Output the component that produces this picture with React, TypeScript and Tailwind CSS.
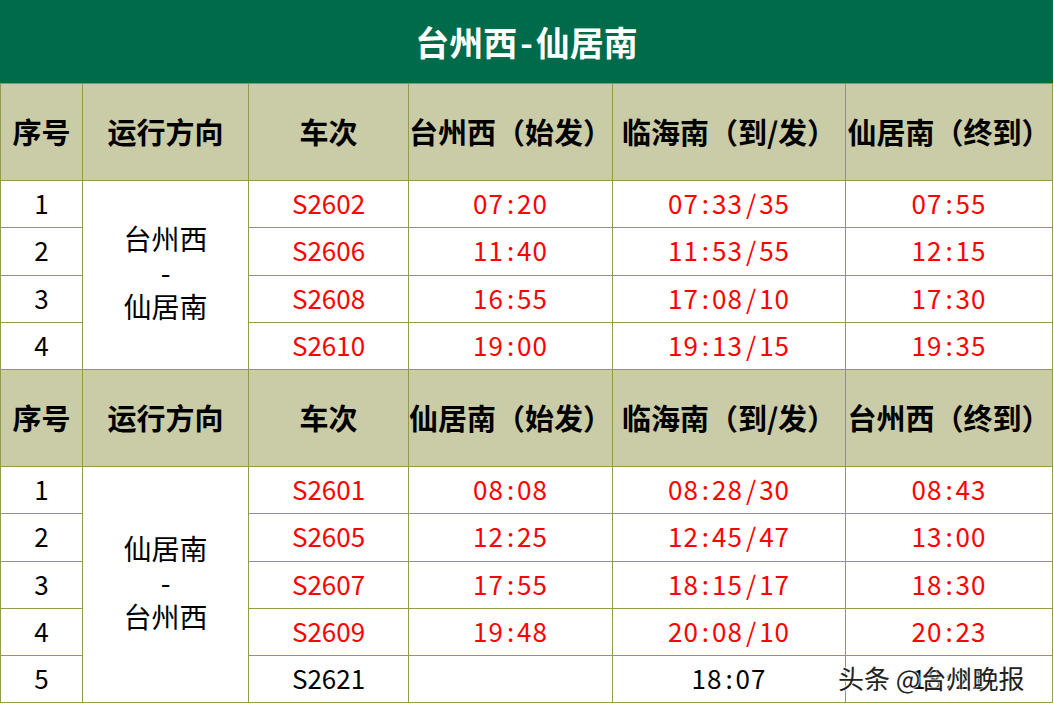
const FONT = "font-['Noto_Sans_CJK_SC',sans-serif]";

type Row = { no: string; train: string; a: string; b: string; c: string; red?: boolean };

const up: Row[] = [
  { no: "1", train: "S2602", a: "07:20", b: "07:33/35", c: "07:55", red: true },
  { no: "2", train: "S2606", a: "11:40", b: "11:53/55", c: "12:15", red: true },
  { no: "3", train: "S2608", a: "16:55", b: "17:08/10", c: "17:30", red: true },
  { no: "4", train: "S2610", a: "19:00", b: "19:13/15", c: "19:35", red: true },
];

const down: Row[] = [
  { no: "1", train: "S2601", a: "08:08", b: "08:28/30", c: "08:43", red: true },
  { no: "2", train: "S2605", a: "12:25", b: "12:45/47", c: "13:00", red: true },
  { no: "3", train: "S2607", a: "17:55", b: "18:15/17", c: "18:30", red: true },
  { no: "4", train: "S2609", a: "19:48", b: "20:08/10", c: "20:23", red: true },
  { no: "5", train: "S2621", a: "", b: "18:07", c: "18:21" },
];

// widen the separators a bit, the source font sets ":" and "/" half-width
function Time({ v }: { v: string }) {
  const parts = v.split(/([:/])/);
  return (
    <span>
      {parts.map((p, i) =>
        p === ":" || p === "/" ? (
          <span key={i} className="mx-[3px]">{p}</span>
        ) : (
          <span key={i} className="tracking-[1px]">{p}</span>
        )
      )}
    </span>
  );
}

function Head({ from, to }: { from: string; to: string }) {
  const cls = "bg-[#c9cca6] flex items-center justify-center text-[29px] font-bold text-black whitespace-nowrap";
  return (
    <>
      <div className={cls}>序号</div>
      <div className={cls}>运行方向</div>
      <div className={cls}>车次</div>
      <div className={cls}>{from}（始发）</div>
      <div className={cls}>临海南（到/发）</div>
      <div className={cls}>{to}（终到）</div>
    </>
  );
}

function Body({ rows, from, to, span }: { rows: Row[]; from: string; to: string; span: string }) {
  const cell = "bg-white flex items-center justify-center text-[26px] pb-[4px]";
  return (
    <>
      {rows.map((r, i) => {
        const tone = r.red ? "text-[#ff0000]" : "text-black";
        return (
          <div key={r.no} className="contents">
            <div className={`${cell} text-black`}>{r.no}</div>
            {i === 0 && (
              <div className={`${span} bg-white flex flex-col items-center justify-center text-[28px] text-black leading-[34px] pb-[6px]`}>
                <span>{from}</span>
                <span>-</span>
                <span>{to}</span>
              </div>
            )}
            <div className={`${cell} ${tone}`}>{r.train}</div>
            <div className={`${cell} ${tone}`}><Time v={r.a} /></div>
            <div className={`${cell} ${tone}`}><Time v={r.b} /></div>
            <div className={`${cell} ${tone}`}><Time v={r.c} /></div>
          </div>
        );
      })}
    </>
  );
}

export default function App() {
  return (
    <div className={`${FONT} relative w-[1054px] h-[704px] bg-white overflow-hidden`}>
      <div className="grid w-[1053px] gap-px bg-[#909c48] px-px pb-px grid-cols-[81px_165px_159px_203px_232px_206px] grid-rows-[83px_96px_46px_47px_46px_46px_96px_46px_47px_46px_46px_46px]">
        <div className="col-span-6 bg-[#006b4a] flex items-center justify-center text-white font-bold text-[34px] -mx-px">
          台州西<span className="mx-[3px]">-</span>仙居南
        </div>
        <Head from="台州西" to="仙居南" />
        <Body rows={up} from="台州西" to="仙居南" span="row-span-4" />
        <Head from="仙居南" to="台州西" />
        <Body rows={down} from="仙居南" to="台州西" span="row-span-5" />
      </div>
      <div className="absolute left-[838px] top-[658px] text-[26px] text-[#222] [text-shadow:0_0_2px_#fff,0_0_2px_#fff,0_0_3px_#fff] whitespace-nowrap">
        头条 @台州晚报
      </div>
    </div>
  );
}
